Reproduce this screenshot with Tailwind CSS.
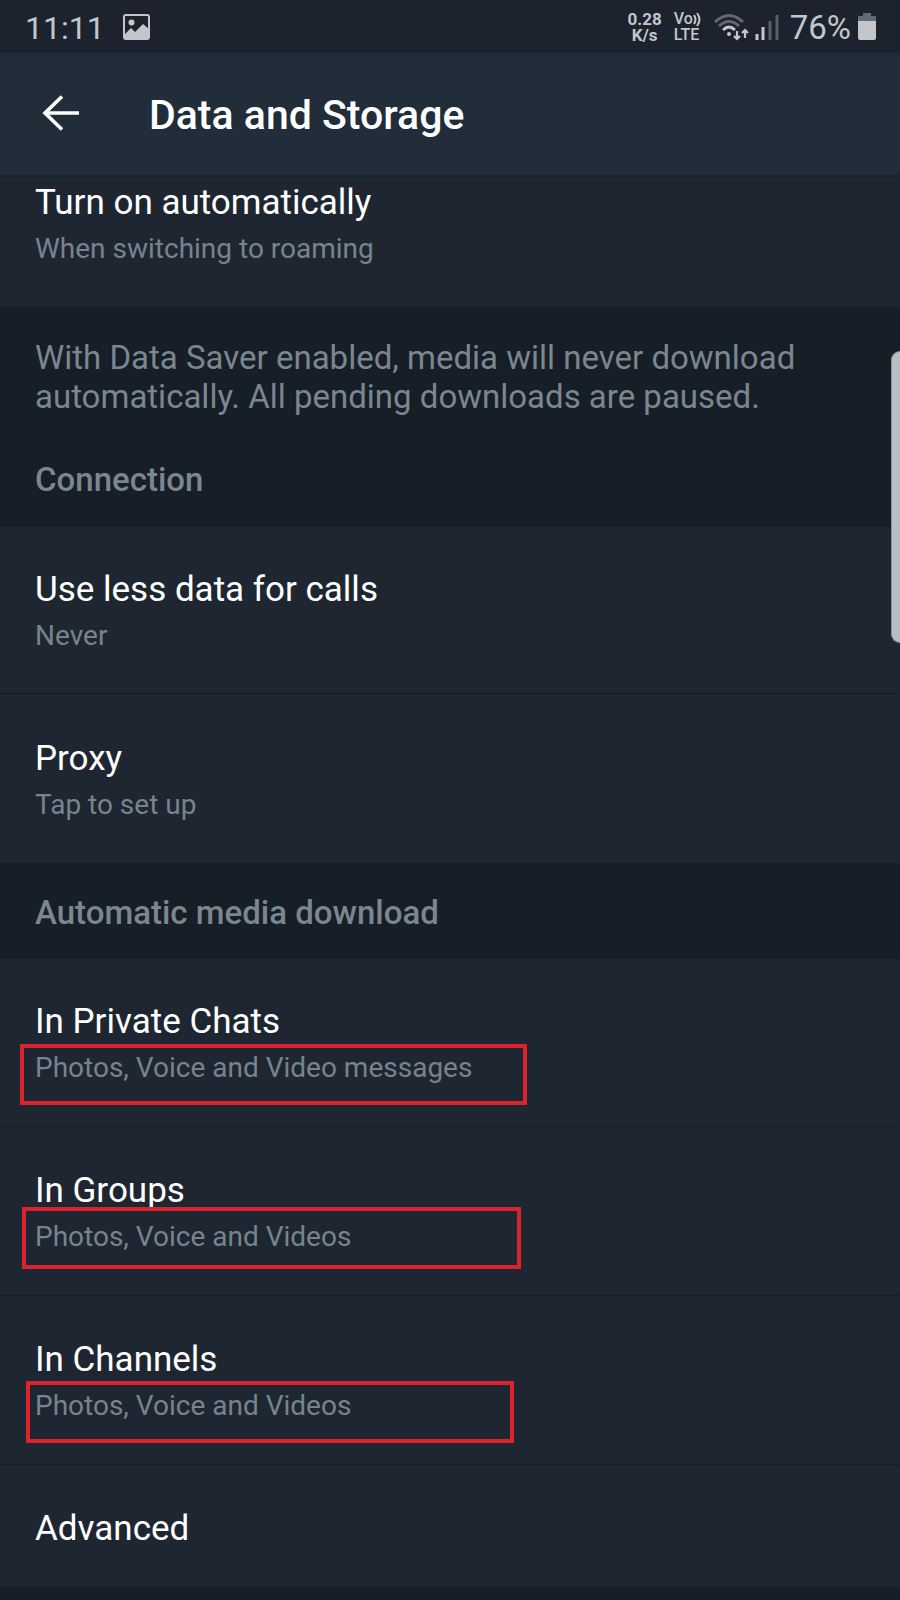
<!DOCTYPE html>
<html lang="en">
<head>
<meta charset="utf-8">
<meta name="viewport" content="width=device-width, initial-scale=1">
<title>Data and Storage</title>
<script src="https://cdn.jsdelivr.net/npm/@tailwindcss/browser@4"></script>
</head>
<body class="relative min-h-screen overflow-x-hidden bg-[#161e27] font-[Roboto,sans-serif] text-white">

<!-- Status bar -->
<div class="flex h-[53px] items-center justify-between bg-[#1c232e] pl-[25px] pr-[24px] pt-[2px] text-[#c3c6cb]">
  <div class="flex items-center gap-[18px]">
    <time class="text-[32px] leading-[40px]">11:11</time>
    <svg class="mb-[2px] h-[26px] w-[27px]" viewBox="0 0 27 26" role="img" aria-label="Screenshot saved">
      <rect x="1" y="1" width="25" height="24" rx="2" fill="none" stroke="currentColor" stroke-width="2"/>
      <circle cx="8.500" cy="8.500" r="3" fill="currentColor"/>
      <path d="M2 20l6-6 4 4 8-8 6 5v10H2z" fill="currentColor"/>
    </svg>
  </div>
  <div class="flex items-center">
    <div class="pb-[2px] text-center text-[17px] font-bold leading-[16px]"><div>0.28</div><div>K/s</div></div>
    <div class="ml-[12px] pb-[2px] text-[16px] font-medium leading-[16px]">
      <div class="flex items-center">Vo<svg class="h-[16px] w-[8px]" viewBox="0 0 8 16" aria-hidden="true"><path d="M1 4q3 4.500 0 9M4 2q5 6.500 0 13" fill="none" stroke="currentColor" stroke-width="2"/></svg></div>
      <div>LTE</div>
    </div>
    <svg class="ml-[13px] mb-[2px] h-[30px] w-[36px]" viewBox="0 0 36 30" role="img" aria-label="Wi-Fi">
      <g fill="none" stroke-width="2.800">
        <path d="M1 10q14-13 28 0" stroke="#626971"/>
        <path d="M5 14q10-9 20 0" stroke="#626971"/>
        <path d="M9 18q6-6 12 0" stroke="currentColor"/>
      </g>
      <circle cx="15" cy="22" r="2" fill="currentColor"/>
      <path d="M23 19v8M20 24l3 3 3-3M31 26v-8M28 21l3-3 3 3" fill="none" stroke="currentColor" stroke-width="2.200"/>
    </svg>
    <svg class="ml-[5px] mb-[2px] h-[26px] w-[24px]" viewBox="0 0 24 26" role="img" aria-label="Signal">
      <path d="M2 20v6M8 13v13" stroke="currentColor" stroke-width="3"/>
      <path d="M15 7v19M22 1v25" stroke="#59606a" stroke-width="3"/>
    </svg>
    <span class="ml-[11px] text-[33px] leading-[40px]">76%</span>
    <svg class="ml-[7px] mb-[2px] h-[27px] w-[18px]" viewBox="0 0 18 27" role="img" aria-label="Battery">
      <path d="M5 0h8v3h5v6H0V3h5z" fill="#626971"/>
      <path d="M0 8h18v17q0 2-2 2H2q-2 0-2-2z" fill="currentColor"/>
    </svg>
  </div>
</div>

<header class="flex h-[122px] items-center bg-[#222d3a] pl-[42px]">
  <button type="button" aria-label="Back" class="flex h-12 w-[107px] items-center pb-[2px]">
    <svg class="h-[36px] w-[38px]" viewBox="0 0 38 36" fill="none" stroke="currentColor" stroke-width="3.600" aria-hidden="true"><path d="M37 18H3M20 1.500L3 18l17 16.500"/></svg>
  </button>
  <h1 class="pt-[2px] text-[41px] font-medium leading-[48px]">Data and Storage</h1>
</header>

<main>
  <button type="button" class="block w-full border-t-2 border-[#1a222c] bg-[#1e2731] px-[35px] pb-[42px] pt-[6px] text-left">
    <span class="block text-[35px] leading-[40px]">Turn on automatically</span>
    <span class="mt-[10px] block text-[28px] leading-[32px] text-[#77838e]">When switching to roaming</span>
  </button>

  <p class="px-[35px] pt-[31px] text-[33px] leading-[39px] text-[#7b868f]">With Data Saver enabled, media will never download automatically. All pending downloads are paused.</p>

  <section>
    <h2 class="px-[35px] pb-[28px] pt-[45px] text-[33px] font-medium leading-[38px] text-[#7b868f]">Connection</h2>
    <button type="button" class="block w-full bg-[#1e2731] px-[35px] pb-[41px] pt-[43px] text-left">
      <span class="block text-[35px] leading-[40px]">Use less data for calls</span>
      <span class="mt-[10px] block text-[28px] leading-[32px] text-[#77838e]">Never</span>
    </button>
    <button type="button" class="block w-full border-t border-[#141c25] bg-[#1e2731] px-[35px] pb-[42px] pt-[45px] text-left">
      <span class="block text-[35px] leading-[40px]">Proxy</span>
      <span class="mt-[10px] block text-[28px] leading-[32px] text-[#77838e]">Tap to set up</span>
    </button>
  </section>

  <section>
    <h2 class="px-[35px] pb-[27px] pt-[31px] text-[33px] font-medium leading-[38px] text-[#7b868f]">Automatic media download</h2>
    <button type="button" class="relative block w-full bg-[#1e2731] px-[35px] pb-[42px] pt-[43px] text-left">
      <span class="block text-[35px] leading-[40px]">In Private Chats</span>
      <span class="mt-[10px] block text-[28px] leading-[32px] text-[#77838e]">Photos, Voice and Video messages</span>
      <span class="absolute left-[20px] top-[85px] h-[61px] w-[507px] border-4 border-[#dc232d]"></span>
    </button>
    <button type="button" class="relative block w-full border-t border-[#141c25] bg-[#1e2731] px-[35px] pb-[42px] pt-[44px] text-left">
      <span class="block text-[35px] leading-[40px]">In Groups</span>
      <span class="mt-[10px] block text-[28px] leading-[32px] text-[#77838e]">Photos, Voice and Videos</span>
      <span class="absolute left-[22px] top-[80px] h-[62px] w-[499px] border-4 border-[#dc232d]"></span>
    </button>
    <button type="button" class="relative block w-full border-t border-[#141c25] bg-[#1e2731] px-[35px] pb-[42px] pt-[44px] text-left">
      <span class="block text-[35px] leading-[40px]">In Channels</span>
      <span class="mt-[10px] block text-[28px] leading-[32px] text-[#77838e]">Photos, Voice and Videos</span>
      <span class="absolute left-[26px] top-[85px] h-[62px] w-[488px] border-4 border-[#dc232d]"></span>
    </button>
    <button type="button" class="block w-full border-t border-[#141c25] bg-[#1e2731] px-[35px] pb-[38px] pt-[44px] text-left">
      <span class="block text-[35px] leading-[40px]">Advanced</span>
    </button>
  </section>
</main>

<!-- Edge panel handle -->
<div class="absolute right-0 top-[351px] h-[292px] w-[9px] rounded-l-[9px] border-y border-l border-[#8b9096] bg-[#babdc1]"></div>

</body>
</html>
